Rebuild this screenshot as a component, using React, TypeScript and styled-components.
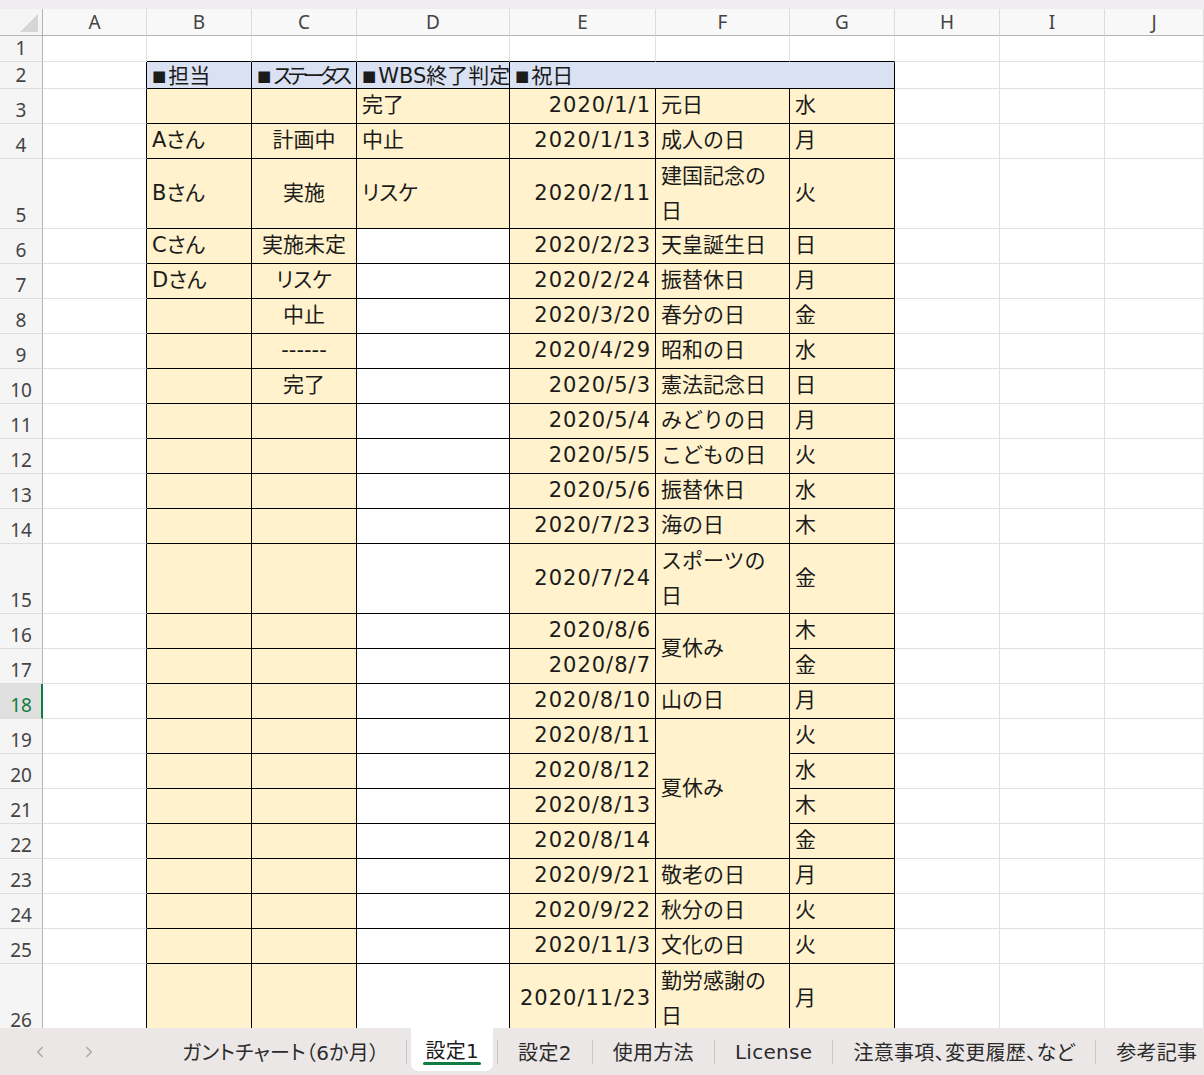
import React from 'react';
import styled, { createGlobalStyle } from 'styled-components';
import { ChevronLeft, ChevronRight } from 'lucide-react';

const GlobalStyle = createGlobalStyle`
  html, body { margin: 0; padding: 0; background: #ffffff; }
  body { font-family: "DejaVu Sans", "Noto Sans CJK JP", sans-serif; overflow: hidden; }
  #root { width: 1204px; height: 1075px; }
`;

type Fill = 'none' | 'yellow' | 'blue' | 'white';
type Align = 'left' | 'center' | 'right';
type Kind = 'ui' | 'body' | 'date';

interface CellDef {
  text?: string;
  fill: Fill;
  align?: Align;
  rowSpan?: number;
  colSpan?: number;
  darkRight?: boolean;
  darkBottom?: boolean;
  kind?: Kind;
  wrap?: boolean;
  tight?: boolean;
  head?: boolean;
}

const COLS = ['A', 'B', 'C', 'D', 'E', 'F', 'G', 'H', 'I', 'J'];

const Window = styled.div`
  width: 1204px;
  height: 1075px;
  display: flex;
  flex-direction: column;
  background: #ffffff;
  overflow: hidden;
`;

const TopBand = styled.div`
  height: 9px;
  flex: none;
  background: #f0ecef;
`;

const SheetArea = styled.div`
  flex: 1;
  min-height: 0;
  overflow: hidden;
`;

const Grid = styled.div`
  display: grid;
  grid-template-columns: 43px 104px 105px 105px 153px 146px 134px 105px 105px 105px 99px;
  grid-template-rows: 27px 26px 27px 35px 35px 70px repeat(9, 35px) 70px repeat(10, 35px) 70px;
`;

const Corner = styled.div`
  box-sizing: border-box;
  background: #f5f5f5;
  border-right: 1px solid #b4b4b4;
  border-bottom: 1px solid #b4b4b4;
  display: flex;
  align-items: flex-end;
  justify-content: flex-end;
  padding: 0 4px 3px 0;
`;

const CornerTriangle = styled.div`
  width: 18px;
  height: 18px;
  background: #d6d6d6;
  clip-path: polygon(100% 0, 100% 100%, 0 100%);
`;

const ColHead = styled.div`
  box-sizing: border-box;
  background: #f8f8f8;
  border-right: 1px solid #dcdcdc;
  border-bottom: 1px solid #b4b4b4;
  display: flex;
  align-items: center;
  justify-content: center;
  font-family: "Noto Sans", sans-serif;
  font-size: 19px;
  color: #444444;
`;

const RowHead = styled.div<{ $selected?: boolean }>`
  box-sizing: border-box;
  background: ${(p) => (p.$selected ? '#e0e0e0' : '#f5f5f5')};
  border-right: ${(p) => (p.$selected ? '2px solid #107c41' : '1px solid #b4b4b4')};
  border-bottom: 1px solid #dcdcdc;
  display: flex;
  align-items: flex-end;
  justify-content: center;
  font-family: "Noto Sans", sans-serif;
  font-size: 19px;
  line-height: 25px;
  color: ${(p) => (p.$selected ? '#107c41' : '#444444')};
  padding-left: ${(p) => (p.$selected ? '1px' : '0')};
`;

const fillColor = (f: Fill) =>
  f === 'yellow' ? '#fff2cc' : f === 'blue' ? '#d9e1f2' : '#ffffff';

const CellBox = styled.div<{
  $fill: Fill;
  $align: Align;
  $darkRight?: boolean;
  $darkBottom?: boolean;
  $rowSpan: number;
  $colSpan: number;
  $kind: Kind;
  $wrap?: boolean;
  $tight?: boolean;
  $head?: boolean;
}>`
  box-sizing: border-box;
  min-width: 0;
  display: flex;
  align-items: center;
  justify-content: ${(p) =>
    p.$align === 'center' ? 'center' : p.$align === 'right' ? 'flex-end' : 'flex-start'};
  padding: ${(p) => (p.$kind === 'date' ? '0 4px' : p.$head ? '3px 2px 0 4px' : '0 5px')};
  grid-row: span ${(p) => p.$rowSpan};
  grid-column: span ${(p) => p.$colSpan};
  border-right: 1px solid ${(p) => (p.$darkRight ? '#000000' : '#e1e1e1')};
  border-bottom: 1px solid ${(p) => (p.$darkBottom ? '#000000' : '#e1e1e1')};
  background: ${(p) => fillColor(p.$fill)};
  font-size: 21px;
  color: #1b1b1b;
  white-space: ${(p) => (p.$wrap ? 'pre-line' : 'nowrap')};
  line-height: ${(p) => (p.$wrap ? '35px' : '1.2')};
  letter-spacing: ${(p) => (p.$kind === 'date' ? '1px' : p.$tight ? '-4.2px' : '0')};
  font-feature-settings: ${(p) => (p.$kind === 'ui' ? '"palt"' : 'normal')};
  overflow: hidden;
`;

const Mark = styled.span`
  font-family: "DejaVu Sans", sans-serif;
  font-size: 15px;
  letter-spacing: 0;
  margin: 0 2px 0 1px;
  position: relative;
  top: -1px;
`;

const TabBar = styled.div`
  height: 47px;
  flex: none;
  background: #ebe7e7;
  display: flex;
  align-items: stretch;
  font-family: "DejaVu Sans", "Noto Sans CJK JP", sans-serif;
  white-space: nowrap;
`;

const NavArrows = styled.div`
  box-sizing: border-box;
  flex: none;
  width: 162px;
  display: flex;
  align-items: center;
  gap: 31px;
  padding-left: 31px;
  color: #a2a2a2;
`;

const Tab = styled.div<{ $wide?: boolean }>`
  flex: none;
  display: flex;
  align-items: center;
  padding: 0 ${(p) => (p.$wide ? '27px' : '20px')} 0 20px;
  font-size: 20px;
  letter-spacing: 0.3px;
  color: #2b2b2b;
  font-feature-settings: "palt";
`;

const ActiveTab = styled(Tab)`
  position: relative;
  background: #ffffff;
  margin: 0 4px 4px;
  padding: 0 14px;
  border-radius: 0 0 7px 7px;
  color: #1b1b1b;
  &::after {
    content: '';
    position: absolute;
    left: 12px;
    right: 12px;
    bottom: 6px;
    height: 3px;
    border-radius: 2px;
    background: #107c41;
  }
`;

const TabSep = styled.div`
  flex: none;
  width: 1px;
  height: 24px;
  align-self: center;
  background: #cac6c6;
`;

const renderText = (t?: string) => {
  if (!t) return null;
  if (t.startsWith('■')) {
    return (
      <>
        <Mark>■</Mark>
        {t.slice(1)}
      </>
    );
  }
  return t;
};

type Holiday = [string, string | null, number, string];

const holidays: Holiday[] = [
  ['2020/1/1', '元日', 1, '水'],
  ['2020/1/13', '成人の日', 1, '月'],
  ['2020/2/11', '建国記念の\n日', 1, '火'],
  ['2020/2/23', '天皇誕生日', 1, '日'],
  ['2020/2/24', '振替休日', 1, '月'],
  ['2020/3/20', '春分の日', 1, '金'],
  ['2020/4/29', '昭和の日', 1, '水'],
  ['2020/5/3', '憲法記念日', 1, '日'],
  ['2020/5/4', 'みどりの日', 1, '月'],
  ['2020/5/5', 'こどもの日', 1, '火'],
  ['2020/5/6', '振替休日', 1, '水'],
  ['2020/7/23', '海の日', 1, '木'],
  ['2020/7/24', 'スポーツの\n日', 1, '金'],
  ['2020/8/6', '夏休み', 2, '木'],
  ['2020/8/7', null, 1, '金'],
  ['2020/8/10', '山の日', 1, '月'],
  ['2020/8/11', '夏休み', 4, '火'],
  ['2020/8/12', null, 1, '水'],
  ['2020/8/13', null, 1, '木'],
  ['2020/8/14', null, 1, '金'],
  ['2020/9/21', '敬老の日', 1, '月'],
  ['2020/9/22', '秋分の日', 1, '火'],
  ['2020/11/3', '文化の日', 1, '火'],
  ['2020/11/23', '勤労感謝の\n日', 1, '月'],
];

const staff: Record<number, string> = { 4: 'Aさん', 5: 'Bさん', 6: 'Cさん', 7: 'Dさん' };
const statuses: Record<number, string> = {
  4: '計画中',
  5: '実施',
  6: '実施未定',
  7: 'リスケ',
  8: '中止',
  9: '------',
  10: '完了',
};
const wbs: Record<number, string> = { 3: '完了', 4: '中止', 5: 'リスケ' };

const blank = (extra: Partial<CellDef> = {}): CellDef => ({ fill: 'none', ...extra });

const buildRow = (r: number): (CellDef | null)[] => {
  if (r === 1) {
    return [
      blank(),
      ...Array.from({ length: 6 }, () => blank({ darkBottom: true })),
      blank(),
      blank(),
      blank(),
    ];
  }
  if (r === 2) {
    const head = (text: string, colSpan = 1, tight = false): CellDef => ({
      text,
      fill: 'blue',
      kind: 'ui',
      colSpan,
      tight,
      head: true,
      darkRight: true,
      darkBottom: true,
    });
    return [
      blank({ darkRight: true }),
      head('■担当'),
      head('■ステータス', 1, true),
      head('■WBS終了判定'),
      head('■祝日', 3),
      blank(),
      blank(),
      blank(),
    ];
  }
  const h = holidays[r - 3];
  const t = { darkRight: true, darkBottom: true };
  return [
    blank({ darkRight: true }),
    { text: staff[r], fill: 'yellow', kind: 'ui', ...t },
    { text: statuses[r], fill: 'yellow', kind: 'ui', align: 'center', ...t },
    { text: wbs[r], fill: r <= 5 ? 'yellow' : 'white', kind: 'ui', ...t },
    { text: h[0], fill: 'yellow', kind: 'date', align: 'right', ...t },
    h[1] === null
      ? null
      : { text: h[1], fill: 'yellow', kind: 'body', rowSpan: h[2], wrap: h[1].includes('\n'), ...t },
    { text: h[3], fill: 'yellow', kind: 'body', ...t },
    blank(),
    blank(),
    blank(),
  ];
};

const SHEET_ROWS = Array.from({ length: 26 }, (_, i) => i + 1);

const tabsAfter = ['設定2', '使用方法', 'License', '注意事項、変更履歴、など', '参考記事'];

export default function App() {
  return (
    <Window>
      <GlobalStyle />
      <TopBand />
      <SheetArea>
        <Grid>
          <Corner>
            <CornerTriangle />
          </Corner>
          {COLS.map((c) => (
            <ColHead key={`h${c}`}>{c}</ColHead>
          ))}
          {SHEET_ROWS.map((r) => (
            <React.Fragment key={r}>
              <RowHead $selected={r === 18}>{r}</RowHead>
              {buildRow(r).map((cell, ci) =>
                cell === null ? null : (
                  <CellBox
                    key={`${r}-${ci}`}
                    $fill={cell.fill}
                    $align={cell.align ?? 'left'}
                    $darkRight={cell.darkRight}
                    $darkBottom={cell.darkBottom}
                    $rowSpan={cell.rowSpan ?? 1}
                    $colSpan={cell.colSpan ?? 1}
                    $kind={cell.kind ?? 'body'}
                    $wrap={cell.wrap}
                    $tight={cell.tight}
                    $head={cell.head}
                  >
                    {renderText(cell.text)}
                  </CellBox>
                )
              )}
            </React.Fragment>
          ))}
        </Grid>
      </SheetArea>
      <TabBar>
        <NavArrows>
          <ChevronLeft size={18} strokeWidth={1.6} />
          <ChevronRight size={18} strokeWidth={1.6} />
        </NavArrows>
        <Tab $wide>ガントチャート（6か月）</Tab>
        <TabSep />
        <ActiveTab>設定1</ActiveTab>
        {tabsAfter.map((t) => (
          <React.Fragment key={t}>
            <TabSep />
            <Tab>{t}</Tab>
          </React.Fragment>
        ))}
      </TabBar>
    </Window>
  );
}
